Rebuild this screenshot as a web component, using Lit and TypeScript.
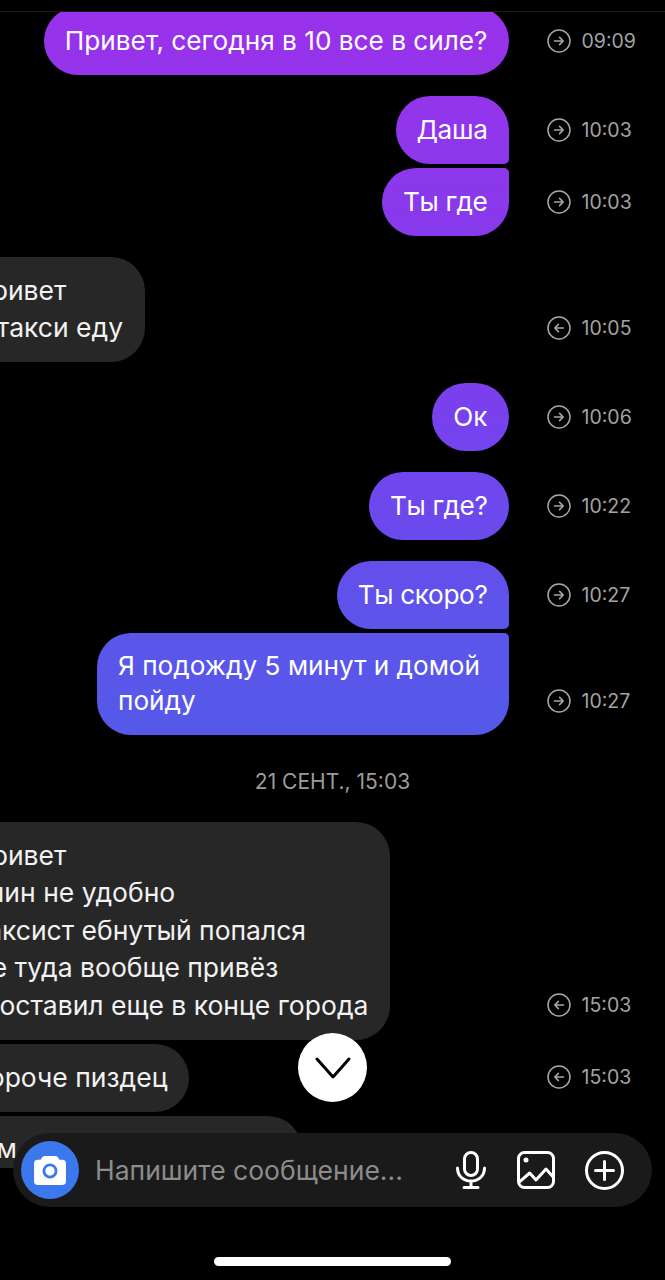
import { LitElement, html, css, svg } from "lit";
import { customElement } from "lit/decorators.js";

type Msg = { side: "out" | "in"; lines: string[]; time: string; cls?: string };

const arrow = (dir: "out" | "in") => html`<svg class="ticon" viewBox="0 0 24 24" fill="none" stroke="#a6a6a6">
  <circle cx="12" cy="12" r="11" stroke-width="1.5"></circle>
  ${dir === "out"
    ? svg`<path d="M7.500 12H16M12.600 8.400 16.200 12l-3.600 3.600" stroke-width="1.600" stroke-linecap="round" stroke-linejoin="round"></path>`
    : svg`<path d="M16.500 12H8M11.400 8.400 7.800 12l3.600 3.600" stroke-width="1.600" stroke-linecap="round" stroke-linejoin="round"></path>`}
</svg>`;

const before: Msg[] = [
  { side: "out", lines: ["Привет, сегодня в 10 все в силе?"], time: "09:09", cls: "first" },
  { side: "out", lines: ["Даша"], time: "10:03", cls: "g21 br snug" },
  { side: "out", lines: ["Ты где"], time: "10:03", cls: "g4 tr snug" },
  { side: "in", lines: ["Привет", "В такси еду"], time: "10:05", cls: "g21" },
  { side: "out", lines: ["Ок"], time: "10:06", cls: "g21" },
  { side: "out", lines: ["Ты где?"], time: "10:22", cls: "g21 snug" },
  { side: "out", lines: ["Ты скоро?"], time: "10:27", cls: "g21 br snug" },
  { side: "out", lines: ["Я подожду 5 минут и домой", "пойду"], time: "10:27", cls: "g4 tr tight" },
];

const after: Msg[] = [
  {
    side: "in",
    lines: ["Привет", "Блин не удобно", "Таксист ебнутый попался", "Не туда вообще привёз", "И оставил еще в конце города"],
    time: "15:03",
  },
  { side: "in", lines: ["Короче пиздец"], time: "15:03", cls: "g4" },
  { side: "in", lines: ["Я м"], time: "", cls: "g4 last" },
];

@customElement("app-root")
export class AppRoot extends LitElement {
  static styles = css`
    :host {
      display: block;
      position: relative;
      width: 665px;
      height: 1280px;
      overflow: hidden;
      background: #000;
      font-family: Inter, "Liberation Sans", sans-serif;
      color: #fff;
    }
    .topline {
      height: 11px;
      border-bottom: 1px solid #1b1b1b;
    }
    .list {
      height: 1156px;
      overflow: hidden;
    }
    .row {
      display: grid;
      grid-template-columns: 509px auto;
      column-gap: 38px;
      align-items: end;
    }
    .first { margin-top: -5px; }
    .g21 { margin-top: 21px; }
    .g4 { margin-top: 4px; }
    .bubble {
      font-size: 26.2px;
      line-height: 38px;
      padding: 14.5px 21.5px 15.5px 21px;
      border-radius: 34px;
      white-space: nowrap;
      box-sizing: border-box;
    }
    .out .bubble {
      justify-self: end;
      color: #fff;
      background: linear-gradient(180deg, #9a31ea 0px, #7a40ee 400px, #6b49ed 520px, #5c55ea 625px, #5459e9 735px) fixed;
    }
    .in .bubble {
      justify-self: start;
      margin-left: -50px;
      padding-left: 22px;
      background: #272727;
      color: #f2f2f2;
      font-size: 26.5px;
      line-height: 37.5px;
    }
    .snug .bubble { letter-spacing: -0.35px; }
    .br .bubble { border-bottom-right-radius: 5px; }
    .tr .bubble { border-top-right-radius: 5px; }
    .tight .bubble { line-height: 35px; padding-top: 15px; padding-bottom: 17px; width: 412px; }
    .last .bubble { width: 352px; height: 68px; }
    .time {
      height: 68px;
      padding-bottom: 1px;
      box-sizing: border-box;
      display: flex;
      align-items: center;
      gap: 10.5px;
      font-size: 19.5px;
      color: #a3a3a3;
    }
    .ticon { width: 24px; height: 24px; flex: none; }
    .date {
      margin: 35px 0 28px;
      text-align: center;
      font-size: 21px;
      line-height: 24px;
      color: #9c9c9c;
    }
    .scroll {
      position: absolute;
      left: 298px;
      top: 1033px;
      width: 69px;
      height: 69px;
      border-radius: 50%;
      background: #fff;
      display: flex;
      align-items: center;
      justify-content: center;
    }
    .scroll svg { width: 36px; height: 22px; }
    .composer {
      position: absolute;
      left: 13px;
      top: 1133px;
      width: 639px;
      height: 74px;
      border-radius: 37px;
      background: #1a1a1a;
      display: flex;
      align-items: center;
      box-sizing: border-box;
      padding-left: 8px;
    }
    .cam {
      width: 58px;
      height: 58px;
      border-radius: 50%;
      background: #3b78ee;
      flex: none;
      display: flex;
      align-items: center;
      justify-content: center;
    }
    .cam svg { width: 32px; height: 30px; }
    .ph {
      margin-left: 16px;
      font-size: 26.5px;
      color: #8c8c8c;
      width: 361px;
      white-space: nowrap;
      flex: none;
    }
    .tools { display: flex; align-items: center; gap: 30.5px; }
    .tools svg { display: block; flex: none; }
    .home {
      width: 237px;
      height: 9px;
      margin: 89px auto 0;
      border-radius: 5px;
      background: #fff;
    }
  `;

  private msg(m: Msg) {
    return html`<div class="row ${m.side} ${m.cls ?? ""}">
      <div class="bubble">${m.lines.map((l, i) => html`${i ? html`<br />` : ""}${l}`)}</div>
      ${m.time ? html`<div class="time">${arrow(m.side)}<span>${m.time}</span></div>` : ""}
    </div>`;
  }

  render() {
    return html`
      <div class="topline"></div>
      <div class="list">
        ${before.map((m) => this.msg(m))}
        <div class="date">21 СЕНТ., 15:03</div>
        ${after.map((m) => this.msg(m))}
      </div>
      <div class="home"></div>
      <div class="composer">
        <div class="cam">
          <svg viewBox="0 0 34 32">
            <path fill="#fff" d="M11 1h12a3 3 0 0 1 2.600 1.600L27 5h3a4 4 0 0 1 4 4v19a4 4 0 0 1-4 4H4a4 4 0 0 1-4-4V9a4 4 0 0 1 4-4h3l1.400-2.400A3 3 0 0 1 11 1z"></path>
            <circle cx="17" cy="17" r="6.500" fill="#fff" stroke="#3b78ee" stroke-width="3"></circle>
          </svg>
        </div>
        <div class="ph">Напишите сообщение...</div>
        <div class="tools">
          <svg width="30" height="38" viewBox="0 0 30 38" fill="none" stroke="#fff" stroke-width="3" stroke-linecap="round">
            <rect x="8.500" y="1.500" width="13" height="23" rx="6.500"></rect>
            <path d="M1.500 17c0 8 6 13 13.500 13s13.500-5 13.500-13M15 30v6.500M8 36.500h14"></path>
          </svg>
          <svg width="38" height="38" viewBox="0 0 38 38" fill="none" stroke="#fff" stroke-width="3" stroke-linejoin="round" stroke-linecap="round">
            <rect x="1.500" y="1.500" width="35" height="35" rx="6"></rect>
            <path d="M2.700 30.700 12.700 22 19 29 29 18l7 7.700"></path>
            <circle cx="9" cy="9" r="2.500" fill="#fff" stroke="none"></circle>
          </svg>
          <svg width="39" height="39" viewBox="0 0 39 39" fill="none" stroke="#fff" stroke-width="3" stroke-linecap="round">
            <circle cx="19.500" cy="19.500" r="18"></circle>
            <path d="M19.500 10.500v18M10.500 19.500h18"></path>
          </svg>
        </div>
      </div>
      <div class="scroll">
        <svg viewBox="0 0 36 22" fill="none" stroke="#000" stroke-width="3" stroke-linecap="round" stroke-linejoin="round">
          <path d="M2 2l16 18L34 2"></path>
        </svg>
      </div>
    `;
  }
}
